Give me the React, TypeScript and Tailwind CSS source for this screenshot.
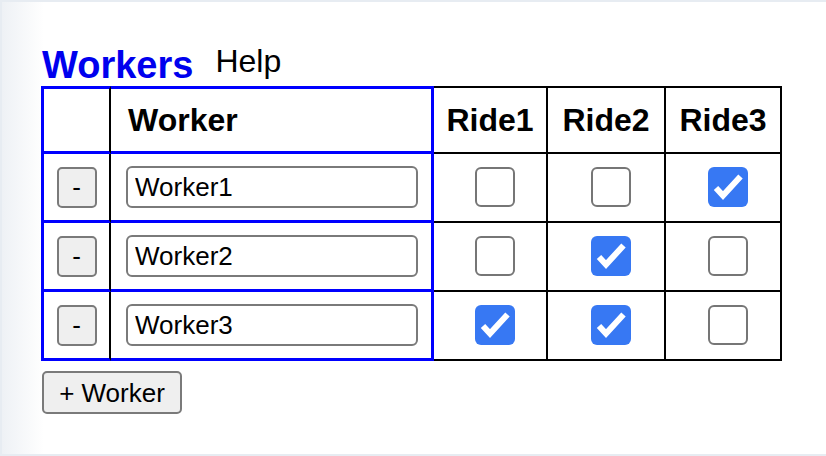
import { useState } from 'react';

const RIDES = ['Ride1', 'Ride2', 'Ride3'];

const INITIAL = [
  { name: 'Worker1', rides: [false, false, true] },
  { name: 'Worker2', rides: [false, true, false] },
  { name: 'Worker3', rides: [true, true, false] },
];

function Check({ checked, onToggle }: { checked: boolean; onToggle: () => void }) {
  return (
    <button
      type="button"
      onClick={onToggle}
      className={`flex h-[40px] w-[40px] items-center justify-center rounded-[6px] ${
        checked ? 'bg-[#3778f3]' : 'border-2 border-[#767676] bg-white'
      }`}
    >
      {checked && (
        <svg width="40" height="40" viewBox="0 0 40 40">
          <polyline points="8,21 15,28.5 32.5,9.5" fill="none" stroke="white" strokeWidth="6" strokeLinejoin="miter" />
        </svg>
      )}
    </button>
  );
}

export default function App() {
  const [workers, setWorkers] = useState(INITIAL);

  const toggle = (w: number, r: number) => {
    setWorkers(workers.map((x, i) => (i === w ? { ...x, rides: x.rides.map((v, j) => (j === r ? !v : v)) } : x)));
  };

  return (
    <div className="h-[456px] w-full border-y-2 border-l-2 border-[#e7ecf2] bg-[linear-gradient(90deg,#eef1f5,#ffffff_42px)] pl-[39px] pt-[41px] font-['Liberation_Sans',Arial,sans-serif]">
      <div className="flex items-start">
        <h2 className="ml-[1px] text-[38px] leading-[44px] font-bold text-[#0000ee]">Workers</h2>
        <span className="ml-[22px] text-[32px] leading-[36px] text-black">Help</span>
      </div>

      <table className="-mt-[1px] table-fixed border-separate border-spacing-0">
        <thead>
          <tr className="h-[68px]">
            <th className="w-[70px] border-y-[3px] border-l-[3px] border-r-2 border-[#0000ff] border-r-black"></th>
            <th className="w-[323px] border-y-[3px] border-r-[3px] border-[#0000ff] pl-[17px] text-left text-[32px] font-bold">Worker</th>
            {RIDES.map((r, i) => (
              <th
                key={r}
                className={`${i === 0 ? 'w-[114px]' : i === 1 ? 'w-[118px]' : 'w-[116px]'} border-y-2 border-r-2 border-black text-center text-[32px] font-bold`}
              >
                {r}
              </th>
            ))}
          </tr>
        </thead>
        <tbody>
          {workers.map((w, wi) => (
            <tr key={wi} className="h-[69px]">
              <td className="border-b-[3px] border-l-[3px] border-r-2 border-[#0000ff] border-r-black">
                <div className="flex justify-center">
                  <button
                    type="button"
                    onClick={() => setWorkers(workers.filter((_, i) => i !== wi))}
                    className="h-[41px] w-[40px] rounded-[5px] border-2 border-[#7a7a7a] bg-[#efefef] text-[26px] leading-none"
                  >
                    -
                  </button>
                </div>
              </td>
              <td className="border-r-[3px] border-b-[3px] border-[#0000ff] pl-[15px]">
                <input
                  value={w.name}
                  onChange={(e) => setWorkers(workers.map((x, i) => (i === wi ? { ...x, name: e.target.value } : x)))}
                  className="block h-[42px] w-[292px] rounded-[6px] border-2 border-[#7a7a7a] bg-white pl-[7px] text-[26px] text-black outline-none"
                />
              </td>
              {w.rides.map((v, ri) => (
                <td key={ri} className="border-r-2 border-b-2 border-black">
                  <div className="flex justify-center pb-[2px] pl-[9px]">
                    <Check checked={v} onToggle={() => toggle(wi, ri)} />
                  </div>
                </td>
              ))}
            </tr>
          ))}
        </tbody>
      </table>

      <button
        type="button"
        onClick={() => setWorkers([...workers, { name: `Worker${workers.length + 1}`, rides: [false, false, false] }])}
        className="mt-[10px] ml-[1px] h-[43px] w-[140px] rounded-[5px] border-2 border-[#7a7a7a] bg-[#efefef] text-[26px] leading-none text-black"
      >
        + Worker
      </button>
    </div>
  );
}
